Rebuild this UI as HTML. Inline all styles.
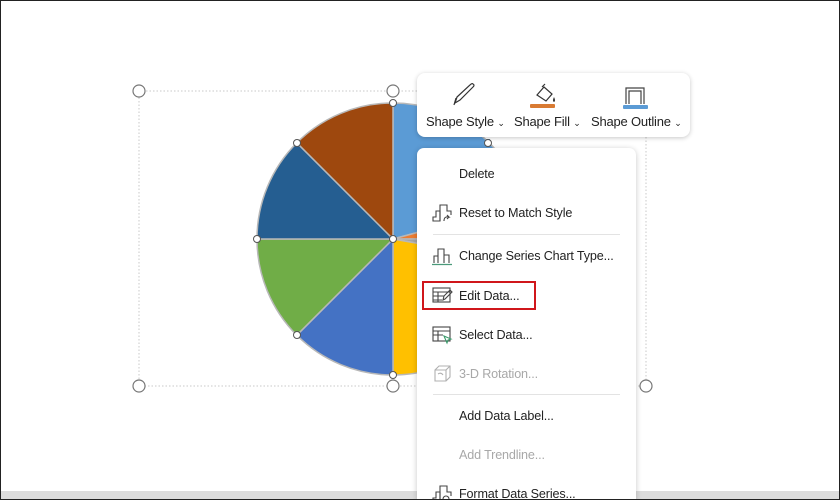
<!DOCTYPE html>
<html><head><meta charset="utf-8">
<style>
html,body{margin:0;padding:0;width:840px;height:500px;overflow:hidden}
body{position:relative;background:#fff;font-family:"Liberation Sans",sans-serif;}
.frame{position:absolute;left:0;top:0;width:838px;height:498px;border:1px solid #222;z-index:50;pointer-events:none}
.bar{position:absolute;left:0;top:491px;width:840px;height:8px;background:#dcdcdc;z-index:1}
.tb{position:absolute;left:417px;top:73px;width:273px;height:64px;background:#fff;border-radius:8px;box-shadow:0 1px 5px rgba(0,0,0,.22);z-index:10}
.tbl{position:absolute;top:41px;font-size:13px;color:#222;white-space:nowrap;letter-spacing:-0.2px}
.menu{position:absolute;left:417px;top:148px;width:219px;height:352px;background:#fff;border-radius:7px 7px 0 0;box-shadow:0 1px 6px rgba(0,0,0,.22);z-index:10;overflow:hidden}
.it{position:absolute;left:42px;font-size:12.6px;color:#222;white-space:nowrap;line-height:16px;letter-spacing:-0.15px}
.dis{color:#a8a8a8}
.sep{position:absolute;left:16px;width:187px;height:1px;background:#e3e3e3}
.ic{position:absolute;left:15px}
.red{position:absolute;left:5px;top:133px;width:110px;height:25px;border:2.5px solid #d0161b}
</style></head><body>
<svg width="840" height="500" style="position:absolute;left:0;top:0;z-index:2">
<rect x="139" y="91" width="507" height="295" fill="none" stroke="#c8c8c8" stroke-dasharray="1.5 2"/>
<rect x="393" y="139" width="97" height="9" fill="#5b9bd5"/>
<g stroke="#b8b8b8" stroke-width="1.5">
<path d="M393 239 L393 103 A136 136 0 0 1 524.4 203.8Z" fill="#5b9bd5"/>
<path d="M393 239 L524.4 203.8 A136 136 0 0 1 529 239Z" fill="#ed7d31"/>
<path d="M393 239 L529 239 A136 136 0 0 1 526.9 262.6Z" fill="#a5a5a5"/>
<path d="M393 239 L526.9 262.6 A136 136 0 0 1 393 375Z" fill="#ffc000"/>
<path d="M393 239 L393 375 A136 136 0 0 1 296.8 335.2Z" fill="#4472c4"/>
<path d="M393 239 L296.8 335.2 A136 136 0 0 1 257 239Z" fill="#70ad47"/>
<path d="M393 239 L257 239 A136 136 0 0 1 296.8 142.8Z" fill="#255e91"/>
<path d="M393 239 L296.8 142.8 A136 136 0 0 1 393 103Z" fill="#9e480e"/>
</g>
<g fill="#fff" stroke="#555" stroke-width="1">
<circle cx="393" cy="103" r="3.5"/><circle cx="257" cy="239" r="3.5"/><circle cx="393" cy="239" r="3.5"/>
<circle cx="297" cy="143" r="3.5"/><circle cx="297" cy="335" r="3.5"/><circle cx="393" cy="375" r="3.5"/><circle cx="488" cy="143" r="3.5"/>
</g>
<g fill="#fff" stroke="#777" stroke-width="1.2">
<circle cx="139" cy="91" r="6"/><circle cx="393" cy="91" r="6"/><circle cx="139" cy="386" r="6"/><circle cx="393" cy="386" r="6"/><circle cx="646" cy="386" r="6"/>
</g>
</svg>
<div class="tb">
<svg width="273" height="40" style="position:absolute;left:0;top:0">
<g fill="none" stroke="#333" stroke-width="1.2">
<path d="M38 30 L43 27 L56 14 Q58 12 56 11 Q55 10 53 12 L40 24 Z"/><path d="M37 32 L39 25"/>
</g>
<g fill="none" stroke="#333" stroke-width="1.2"><path d="M120 22 L127 14 L135 21 L129 28 Z"/><path d="M125 14 L128 11"/></g>
<path d="M137 24 Q139 28 137 29 Q135 28 137 24Z" fill="#333"/>
<rect x="113" y="31" width="25" height="4" rx="1" fill="#d97b33"/>
<g fill="none" stroke="#444" stroke-width="1.2"><path d="M209 31 V15 H227 V31"/><path d="M212 31 V18 H224 V31"/></g>
<rect x="206" y="32" width="25" height="4" rx="1" fill="#5b9bd5"/>
</svg>
<div class="tbl" style="left:9px">Shape Style <span style="font-size:9px">&#8964;</span></div>
<div class="tbl" style="left:97px">Shape Fill <span style="font-size:9px">&#8964;</span></div>
<div class="tbl" style="left:174px">Shape Outline <span style="font-size:9px">&#8964;</span></div>
</div>
<div class="menu">
<div class="it" style="top:18px">Delete</div>
<svg class="ic" style="top:55px" width="22" height="20"><g fill="none" stroke="#444" stroke-width="1.1"><path d="M1 18 H8 V8 H4 V14 H1Z"/><path d="M8 18 V2 H15 V8 H19 V12"/><path d="M12 18 Q12 13 17 14 L15 12 M17 14 L15 16"/></g></svg>
<div class="it" style="top:57px">Reset to Match Style</div>
<div class="sep" style="top:86px"></div>
<svg class="ic" style="top:98px" width="22" height="20"><g fill="none" stroke="#444" stroke-width="1.1"><path d="M2 17 V10 H6 V17 M6 17 V3 H12 V17 M12 17 V9 H17 V17"/></g><path d="M0 18.5 H20" stroke="#4a9a7a" stroke-width="1.3"/></svg>
<div class="it" style="top:100px">Change Series Chart Type...</div>
<div class="red"></div>
<svg class="ic" style="top:138px" width="22" height="20"><g fill="none" stroke="#444" stroke-width="1.1"><rect x="1" y="2" width="17" height="14"/><path d="M1 6 H18 M1 10 H12 M1 14 H10 M6 6 V16 M12 10 L18 4 L20 6 L13 13 L11 14 Z"/></g></svg>
<div class="it" style="top:140px">Edit Data...</div>
<svg class="ic" style="top:177px" width="22" height="20"><g fill="none" stroke="#444" stroke-width="1.1"><rect x="1" y="2" width="17" height="14"/><path d="M1 6 H18 M1 10 H11 M6 6 V16"/></g><path d="M12 11 L19 14 L16 15 L15 18 Z" fill="none" stroke="#3a9a6a" stroke-width="1.1"/></svg>
<div class="it" style="top:179px">Select Data...</div>
<svg class="ic" style="top:216px" width="22" height="20"><g fill="none" stroke="#b0b0b0" stroke-width="1.1"><path d="M3 6 L7 2 H18 V13 L14 17 H3Z M3 6 H14 V17 M14 6 L18 2"/><path d="M6 10 Q9 8 11 11"/></g></svg>
<div class="it dis" style="top:218px">3-D Rotation...</div>
<div class="sep" style="top:246px"></div>
<div class="it" style="top:260px">Add Data Label...</div>
<div class="it dis" style="top:299px">Add Trendline...</div>
<svg class="ic" style="top:336px" width="22" height="20"><g fill="none" stroke="#444" stroke-width="1.1"><path d="M1 18 H8 V8 H4 V14 H1Z"/><path d="M8 18 V2 H15 V8 H19 V12"/><circle cx="14" cy="15" r="3"/></g></svg>
<div class="it" style="top:338px">Format Data Series...</div>
</div>
<div class="bar"></div>
<div class="frame"></div>
</body></html>
